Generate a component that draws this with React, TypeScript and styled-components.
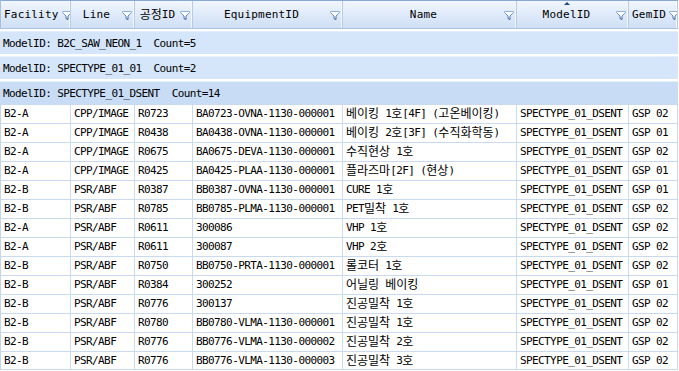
import React from 'react';
import styled, { createGlobalStyle } from 'styled-components';

const COLS = '70px 64px 58px 150px 174px 112px 49px';

type RowType = [string, string, string, string, string, string, string];

const groups = [
  { model: 'B2C_SAW_NEON_1', count: 5 },
  { model: 'SPECTYPE_01_01', count: 2 },
  { model: 'SPECTYPE_01_DSENT', count: 14, open: true },
];

const rows: RowType[] = [
  ['B2-A', 'CPP/IMAGE', 'R0723', 'BA0723-OVNA-1130-000001', '베이킹 1호[4F] (고온베이킹)', 'SPECTYPE_01_DSENT', 'GSP 02'],
  ['B2-A', 'CPP/IMAGE', 'R0438', 'BA0438-OVNA-1130-000001', '베이킹 2호[3F] (수직화학동)', 'SPECTYPE_01_DSENT', 'GSP 01'],
  ['B2-A', 'CPP/IMAGE', 'R0675', 'BA0675-DEVA-1130-000001', '수직현상 1호', 'SPECTYPE_01_DSENT', 'GSP 02'],
  ['B2-A', 'CPP/IMAGE', 'R0425', 'BA0425-PLAA-1130-000001', '플라즈마[2F] (현상)', 'SPECTYPE_01_DSENT', 'GSP 01'],
  ['B2-B', 'PSR/ABF', 'R0387', 'BB0387-OVNA-1130-000001', 'CURE 1호', 'SPECTYPE_01_DSENT', 'GSP 01'],
  ['B2-B', 'PSR/ABF', 'R0785', 'BB0785-PLMA-1130-000001', 'PET밀착 1호', 'SPECTYPE_01_DSENT', 'GSP 02'],
  ['B2-A', 'PSR/ABF', 'R0611', '300086', 'VHP 1호', 'SPECTYPE_01_DSENT', 'GSP 02'],
  ['B2-A', 'PSR/ABF', 'R0611', '300087', 'VHP 2호', 'SPECTYPE_01_DSENT', 'GSP 02'],
  ['B2-B', 'PSR/ABF', 'R0750', 'BB0750-PRTA-1130-000001', '롤코터 1호', 'SPECTYPE_01_DSENT', 'GSP 02'],
  ['B2-B', 'PSR/ABF', 'R0384', '300252', '어닐링 베이킹', 'SPECTYPE_01_DSENT', 'GSP 01'],
  ['B2-B', 'PSR/ABF', 'R0776', '300137', '진공밀착 1호', 'SPECTYPE_01_DSENT', 'GSP 02'],
  ['B2-B', 'PSR/ABF', 'R0780', 'BB0780-VLMA-1130-000001', '진공밀착 1호', 'SPECTYPE_01_DSENT', 'GSP 02'],
  ['B2-B', 'PSR/ABF', 'R0776', 'BB0776-VLMA-1130-000002', '진공밀착 2호', 'SPECTYPE_01_DSENT', 'GSP 02'],
  ['B2-B', 'PSR/ABF', 'R0776', 'BB0776-VLMA-1130-000003', '진공밀착 3호', 'SPECTYPE_01_DSENT', 'GSP 02'],
];

const headers = [
  { label: 'Facility' },
  { label: 'Line' },
  { label: '공정ID' },
  { label: 'EquipmentID' },
  { label: 'Name' },
  { label: 'ModelID', sorted: true },
  { label: 'GemID' },
];

// split text so hangul runs can get a full-width size
function Mixed({ text }: { text: string }) {
  const parts = text.split(/([\uAC00-\uD7A3]+)/);
  return (
    <Text>
      {parts.map((p, i) =>
        /[\uAC00-\uD7A3]/.test(p) ? <Hangul key={i}>{p}</Hangul> : <React.Fragment key={i}>{p}</React.Fragment>
      )}
    </Text>
  );
}

function FilterIcon() {
  return (
    <FilterSvg width="10" height="10" viewBox="0 0 10 10">
      <defs>
        <linearGradient id="fg" x1="0" y1="0" x2="0" y2="1">
          <stop offset="0" stopColor="#8fb0dc" />
          <stop offset="1" stopColor="#2d5597" />
        </linearGradient>
      </defs>
      <path d="M0.5 1.5 H9.5 V2.5 L6 6 V9.5 L4 8.5 V6 L0.5 2.5 Z" fill="#ffffff" stroke="url(#fg)" strokeWidth="1" />
    </FilterSvg>
  );
}

export default function App() {
  return (
    <>
      <GlobalStyle />
      <Grid>
        <HeaderRow>
          {headers.map((h) => (
            <HeaderCell key={h.label}>
              {h.sorted && <SortArrow />}
              <HeaderLabel>
                <Mixed text={h.label} />
              </HeaderLabel>
              <FilterIcon />
            </HeaderCell>
          ))}
        </HeaderRow>
        {groups.map((g) => (
          <GroupRow key={g.model} $open={!!g.open}>
            {`ModelID: ${g.model}  Count=${g.count}`}
          </GroupRow>
        ))}
        {rows.map((r, i) => (
          <DataRow key={i}>
            {r.map((c, j) => (
              <Cell key={j}>
                <Mixed text={c} />
              </Cell>
            ))}
          </DataRow>
        ))}
      </Grid>
    </>
  );
}

const GlobalStyle = createGlobalStyle`
  body {
    margin: 0;
    background: #ffffff;
    font-family: "DejaVu Sans Mono", "Noto Sans CJK KR", monospace;
    font-size: 11px;
    letter-spacing: -0.6px;
    color: #000000;
  }
`;

const Grid = styled.div`
  width: 678px;
  display: flex;
  flex-direction: column;
`;

const HeaderRow = styled.div`
  display: grid;
  grid-template-columns: ${COLS};
  height: 29px;
  box-sizing: border-box;
  border-top: 1px solid #86a9d6;
  border-left: 1px solid #a7c0e2;
  border-bottom: 1px solid #a9c1e1;
  background: linear-gradient(to bottom, #f1f6fd 0%, #dfeafa 50%, #cfdff5 100%);
`;

const HeaderCell = styled.div`
  position: relative;
  display: flex;
  align-items: center;
  padding: 0 2px 0 3px;
  border-right: 1px solid #b9cbe3;
  box-shadow: inset -1px 0 0 #f4f8fe;
  overflow: hidden;
`;

const HeaderLabel = styled.span`
  flex: 1;
  text-align: center;
  white-space: nowrap;
  letter-spacing: 0.2px;
`;

const Text = styled.span`
  white-space: pre;
  line-height: 14px;
`;

const FilterSvg = styled.svg`
  flex: none;
  margin-left: 3px;
  margin-top: 1px;
`;

const SortArrow = styled.div`
  position: absolute;
  top: 1px;
  left: 50%;
  margin-left: -9px;
  width: 0;
  height: 0;
  border-left: 3px solid transparent;
  border-right: 3px solid transparent;
  border-bottom: 3px solid #1f4587;
`;

const GroupRow = styled.div<{ $open: boolean }>`
  height: 22px;
  display: flex;
  align-items: center;
  padding-left: 3px;
  margin-top: 2px;
  background: ${(p) => (p.$open ? '#c9dcf6' : '#d5e5fa')};
  border-top: 1px solid #e6effc;
  white-space: pre;
  &:first-of-type {
    margin-top: 0;
  }
`;

const DataRow = styled.div`
  display: grid;
  grid-template-columns: ${COLS};
  height: 19px;
  box-sizing: border-box;
  border-left: 1px solid #c3d4ec;
  border-top: 1px solid #c9d9ef;
  &:last-child {
    border-bottom: 1px solid #c9d9ef;
  }
`;

const Cell = styled.div`
  display: flex;
  align-items: center;
  padding-left: 3px;
  border-right: 1px solid #c9d9ef;
  white-space: nowrap;
  overflow: hidden;
`;

const Hangul = styled.span`
  font-family: "Noto Sans CJK KR", sans-serif;
  font-size: 12px;
  letter-spacing: 0;
  line-height: 1;
  vertical-align: -1px;
`;
